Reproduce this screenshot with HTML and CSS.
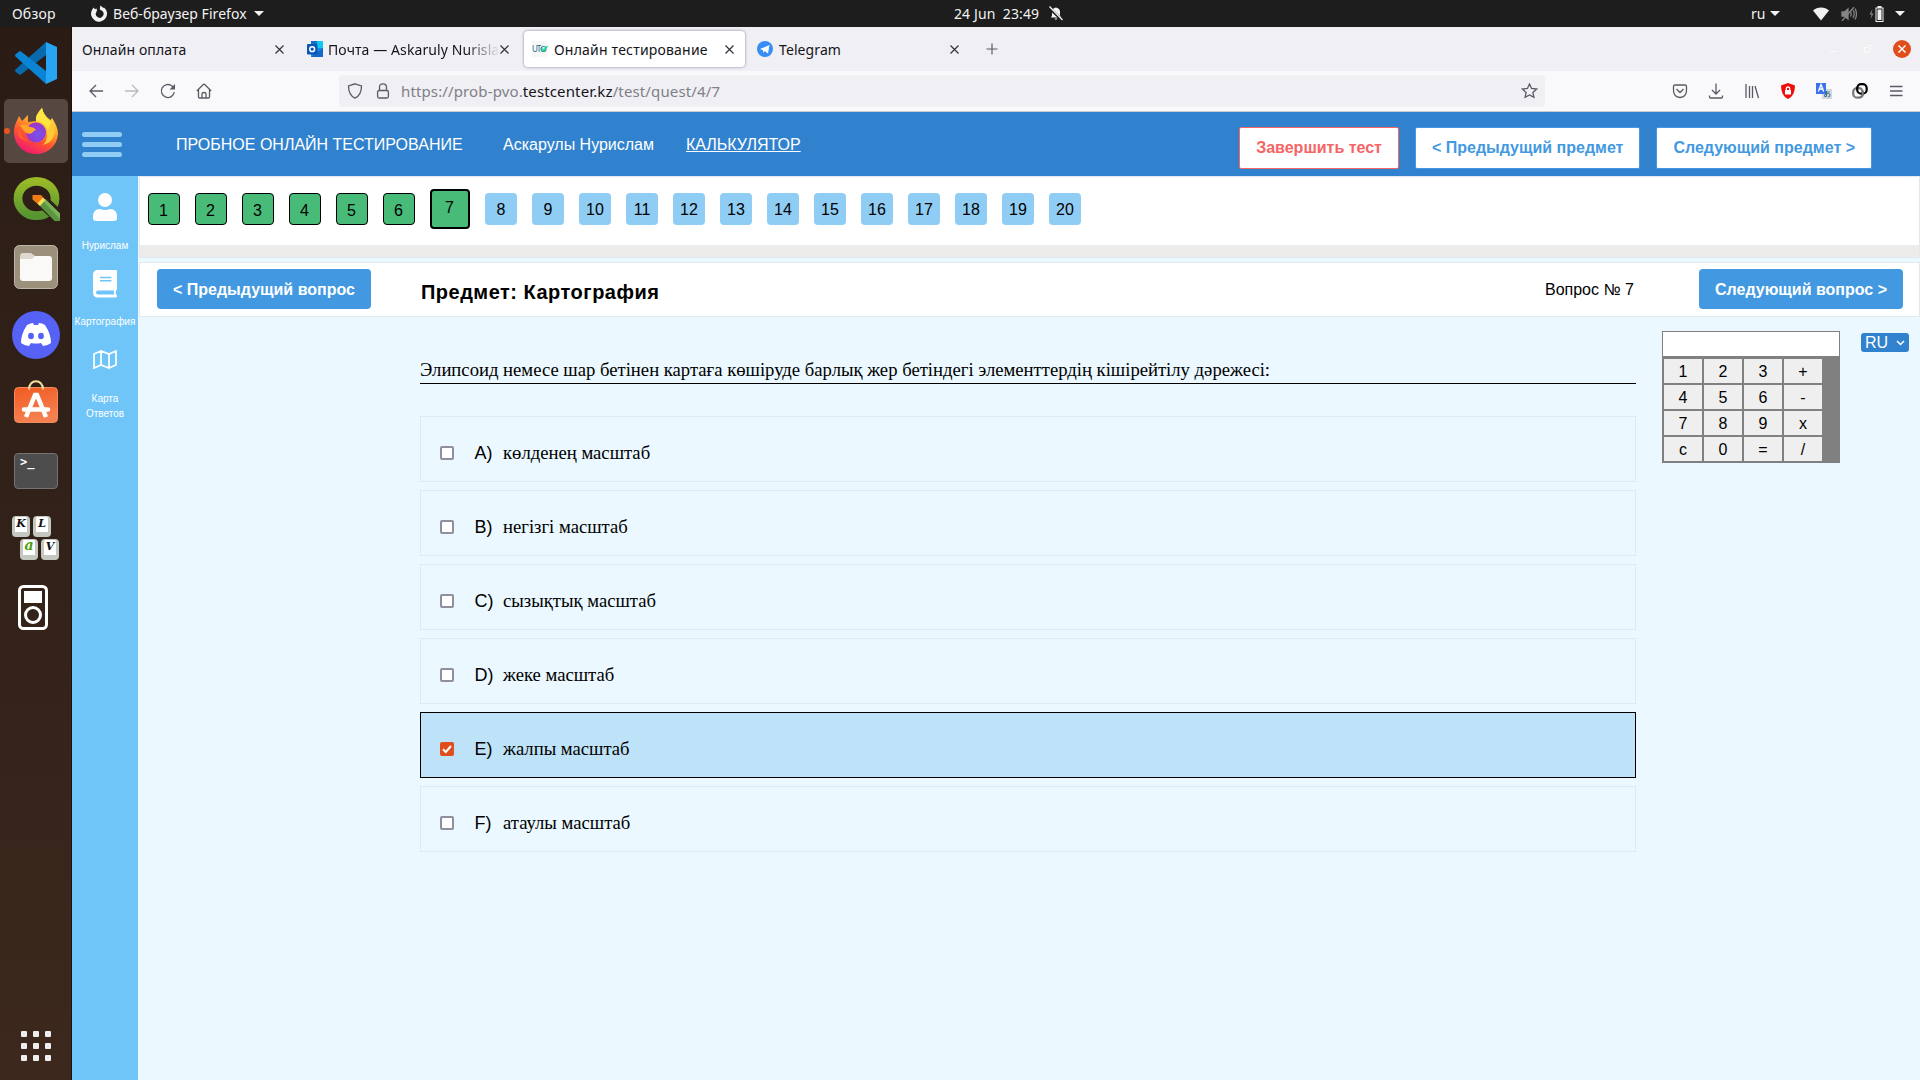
FILE: index.html
```html
<!DOCTYPE html>
<html lang="ru">
<head>
<meta charset="utf-8">
<title>Онлайн тестирование</title>
<link rel="stylesheet" href="styles.css">
</head>
<body>
<header class="topbar">
  <span class="overview">Обзор</span>
  <div class="appmenu">
    <svg width="17" height="17" viewBox="0 0 17 17"><path d="M1 5 2.500 2.500 4 4.200 5.500 3.500 6 5.500 4.800 8.200A3.900 3.900 0 1 0 11 5.800L8.800 4.500 9.300 0.500 12.500 3 13 2.500A8 8 0 1 1 1 5Z" fill="#f2f2f2"/></svg>
    <span class="appname">Веб-браузер Firefox</span>
    <i class="caret"></i>
  </div>
  <div class="clock">
    <span>24 Jun&nbsp; 23:49</span>
    <svg width="14" height="15" viewBox="0 0 14 15"><path d="M2 11.500 3 9.500V6C3 3.500 4.500 2 7 1.500 10 2 11 4 11 6v3.500l1.500 2ZM5.500 12.500h3l-1.500 1.500Z" fill="#f2f2f2"/><path d="M0 1.500 13 14" stroke="#1d1d1d" stroke-width="3"/><path d="M.5.5 13.500 14" stroke="#f2f2f2" stroke-width="1.300"/></svg>
  </div>
  <div class="lang"><span>ru</span><i class="caret"></i></div>
  <div class="tray">
    <svg width="16" height="14" viewBox="0 0 16 14"><path d="M0 3.500C4-.5 12-.5 16 3.500L8 13.500Z" fill="#f2f2f2"/></svg>
    <svg width="16" height="14" viewBox="0 0 16 14" fill="none" stroke="#858585" stroke-width="1.300"><path d="M1 5h2.500L7 2v10L3.500 9H1Z" fill="#858585"/><path d="M9.500 4.500q1.500 2.500 0 5M12 3q2.500 4 0 8M14 1.500q3 5.500 0 11M1 14 13 0"/></svg>
    <svg width="16" height="16" viewBox="0 0 16 16"><path d="M3.500 3 .5 8.500H2.500L1.500 13 4.500 7.500H2.500Z" fill="#858585"/><path d="M8.500 0h4v1.500h2V16h-8V1.500h2Z" fill="#f2f2f2"/><path d="M7.500 2.500h6V15h-6Z" fill="#1d1d1d"/><path d="M8.500 3.500h4V14h-4Z" fill="#f2f2f2"/></svg>
    <i class="caret"></i>
  </div>
</header>
<div class="desktop">
<nav class="dock">
  <div class="slot"><svg width="42" height="42" viewBox="0 0 42 42"><path d="M31 0 1 27q-2 1.500 0 3l3 2.500q1 .5 2 0L31 13Z" fill="#0869ac"/><path d="M31 42 1 15q-2-1.500 0-3l3-2.500q1-.5 2 0L31 29Z" fill="#0a84d4"/><path d="M31 0 42 5v32l-11 5Z" fill="#27a5f2"/></svg></div>
  <div class="slot active"><i class="dot"></i><svg width="46" height="46" viewBox="0 0 46 46"><defs><linearGradient id="fx" x1=".8" y1="0" x2=".3" y2="1"><stop offset="0" stop-color="#fff44f"/><stop offset=".35" stop-color="#ffb02b"/><stop offset=".65" stop-color="#ff552f"/><stop offset="1" stop-color="#ee1676"/></linearGradient><radialGradient id="fp" cx=".6" cy=".6"><stop offset="0" stop-color="#7554ee"/><stop offset="1" stop-color="#9838cf"/></radialGradient></defs><path d="M1 24C1 17 4 13 6 8l3 5 6-6v7l8-1C24 7 27 3 29 0c1 6 6 10 7 14l3-4c5 8 6 12 6 16C44 38 35 46 23 46S1 37 1 24Z" fill="url(#fx)"/><circle cx="23" cy="24.500" r="10" fill="url(#fp)"/><path d="M7 17q7-1 10 2 4 0 6 3-3 1-4 3-5 2-8-2Z" fill="#ffa629"/><path d="M7 17q-1 13 9 16Q9 33 5 27Z" fill="#ff622e"/><path d="M29 0q-7 7-6 13 11 2 11 14 0 6-4 10 10-2 12-13Q41 14 35 10 30 6 29 0Z" fill="#ffc935"/><path d="M29 0q-7 7-6 13 9 1 12 9l3-8Q30 7 29 0Z" fill="#ffe643"/></svg></div>
  <div class="slot"><svg width="47" height="46" viewBox="0 0 47 46"><defs><linearGradient id="qg" x1="0" y1="0" x2="0" y2="1"><stop offset="0" stop-color="#99b928"/><stop offset="1" stop-color="#569531"/></linearGradient></defs><ellipse cx="23.500" cy="22.500" rx="18.500" ry="17.200" fill="none" stroke="url(#qg)" stroke-width="8.800"/><path d="m19 25 23 21h5V33L31 18h-9Z" fill="#2f2018"/><path d="m26 29 6-6 15 14.500V45h-5.500Z" fill="#5c9440"/><path d="m30 25 2-2 15 14.500V43Z" fill="#79b25a"/><path d="M19.500 19H28l3.500 4-5.500 6-6.500-5.500Z" fill="#ee7b16"/><path d="m24.500 27.500 5.500-6 2.500 2.500-5.500 6Z" fill="#f4dc54"/></svg></div>
  <div class="slot"><svg width="46" height="46" viewBox="0 0 46 46"><rect x="1.500" y="1.500" width="43" height="43" rx="5" fill="#9b907b" stroke="#bbb6a8"/><path d="M7 12q0-3 3-3h8l4 3h14v6H7Z" fill="#ddd9ce"/><path d="M7 15h12l3-3h14q3 0 3 3v19q0 3-3 3H10q-3 0-3-3Z" fill="#faf9f7"/></svg></div>
  <div class="slot"><svg width="48" height="48" viewBox="0 0 48 48"><circle cx="24" cy="24" r="24" fill="#5662f6"/><path d="M15 14q4-2 6-2l1 2h4l1-2q3 0 6 2 6 9 6 18-4 3-8 3l-2-3q-5 1-10 0l-2 3q-4 0-8-3 0-9 6-18Z" fill="#fff"/><ellipse cx="19" cy="25" rx="2.900" ry="3.200" fill="#5662f6"/><ellipse cx="29" cy="25" rx="2.900" ry="3.200" fill="#5662f6"/></svg></div>
  <div class="slot store"><svg width="46" height="46" viewBox="0 0 46 46"><defs><linearGradient id="sw" x1="0" y1="0" x2=".3" y2="1"><stop offset="0" stop-color="#f15a22"/><stop offset="1" stop-color="#f58150"/></linearGradient></defs><rect x="1.500" y="8.500" width="43" height="35" rx="4" fill="url(#sw)" stroke="#f48b5e"/><path d="M16 10.500c0-11 14-11 14 0" fill="none" stroke="#f5dc9e" stroke-width="2"/><path d="M13 38 22 16h2l9 22" fill="none" stroke="#fff" stroke-width="4.500"/><path d="M11 30.500h24" stroke="#fff" stroke-width="4.500" stroke-linecap="round"/></svg></div>
  <div class="slot"><div class="term">&gt;_</div></div>
  <div class="slot"><div class="keys"><b>K</b><b>L</b><b class="g">a</b><b>V</b></div></div>
  <div class="slot player"><svg width="30" height="45" viewBox="0 0 30 45"><rect x="1.500" y="1.500" width="27" height="42" rx="4" fill="none" stroke="#fff" stroke-width="3"/><path d="M6 6h18v12H6Z" fill="#fff"/><circle cx="15" cy="30" r="7.500" fill="none" stroke="#fff" stroke-width="3"/></svg></div>
  <div class="apps"><i></i><i></i><i></i><i></i><i></i><i></i><i></i><i></i><i></i></div>
</nav>
<main class="browser">
  <div class="tabs">
    <div class="tab"><span class="tt">Онлайн оплата</span><svg class="x" width="9" height="9"><use href="#x"/></svg></div>
    <div class="tab"><svg width="16" height="16" viewBox="0 0 16 16"><path d="M4 0h12v7H4Z" fill="#0fc7f5"/><path d="M4 0h6v4H4Z" fill="#1570c8"/><path d="M4 7h12v9H4Z" fill="#168de4"/><path d="m4 16 12-9v9Z" fill="#1269c7"/><rect y="3" width="10.500" height="10.500" rx="1" fill="#0a55b5"/><circle cx="5.200" cy="8.200" r="2.400" fill="none" stroke="#fff" stroke-width="1.500"/></svg><span class="tt mail fade">Почта — Askaruly Nurislam</span><svg class="x" width="9" height="9"><use href="#x"/></svg></div>
    <div class="tab current"><span class="fav"><b>UT</b><svg width="8" height="8" viewBox="0 0 8 8"><circle cx="3.500" cy="4" r="2.500" fill="none" stroke="#3a7f9b" stroke-width="1.200"/><path d="m2 3.500 1.700 2L7.500 1" fill="none" stroke="#0fe08a" stroke-width="1.500"/></svg></span><span class="tt wide">Онлайн тестирование</span><svg class="x" width="9" height="9"><use href="#x"/></svg></div>
    <div class="tab"><svg width="16" height="16" viewBox="0 0 16 16"><circle cx="8" cy="8" r="8" fill="#378df4"/><path d="m3 8 9.500-4L11 12.500 7.800 10 6.500 12 6 9.300Z" fill="#fff"/></svg><span class="tt">Telegram</span><svg class="x" width="9" height="9"><use href="#x"/></svg></div>
    <svg class="plus" width="12" height="12" viewBox="0 0 12 12"><path d="M6 .5v11M.5 6h11" stroke="#5b5b66" stroke-width="1.200"/></svg>
    <div class="winbtns"><i class="min"></i><svg class="max" width="9" height="9" viewBox="0 0 9 9"><path d="M.5 2.500h5v5h-5ZM3 .5h5v5" fill="none" stroke="#fafafb"/></svg><span class="close"><svg width="8" height="8" viewBox="0 0 9 9"><path d="m.5.5 8 8m0-8-8 8" stroke="#fff" stroke-width="1.600"/></svg></span></div>
  </div>
  <div class="toolbar">
    <div class="navs">
      <svg width="16" height="16" viewBox="0 0 16 16"><path d="M15 8H2m6-6L2 8l6 6"/></svg>
      <svg class="off" width="16" height="16" viewBox="0 0 16 16"><path d="M1 8h13M8 2l6 6-6 6"/></svg>
      <svg width="16" height="16" viewBox="0 0 16 16"><path d="M14.300 9A6.500 6.500 0 1 1 12 3l2 2"/><path d="M15 1v5.500H9.500Z" fill="#5b5b66" stroke="none"/></svg>
      <svg width="16" height="16" viewBox="0 0 16 16"><path d="M.8 8 7 1.800q1-1 2 0L15.200 8M2.500 6.500V14q0 1 1 1h9q1 0 1-1V6.500M6 15v-4q0-1.500 2-1.500t2 1.500v4"/></svg>
    </div>
    <div class="url">
      <svg width="16" height="16" viewBox="0 0 16 16"><path d="M8 .8 14.500 3c0 6-1.500 9.800-6.500 12.200C3 12.800 1.500 9 1.500 3Z"/></svg>
      <svg width="16" height="16" viewBox="0 0 16 16"><rect x="2.600" y="7.500" width="10.800" height="7.500" rx="1.500"/><path d="M4.500 7.500V4q0-3.200 3.500-3.200T11.500 4v3.500"/></svg>
      <span class="addr">https://prob-pvo.<b>testcenter.kz</b>/test/quest/4/7</span>
      <svg class="star" width="17" height="16" viewBox="0 0 16 16"><path d="m8 1 2.100 4.500 5 .6-3.700 3.300 1 4.900L8 11.900l-4.400 2.400 1-4.900L.9 6.100l5-.6Z"/></svg>
    </div>
    <div class="exts">
      <svg width="16" height="16" viewBox="0 0 16 16"><path d="M3 2h10q1.500 0 1.500 1.500V7q0 7-6.500 7.500Q1.500 14 1.500 7V3.500Q1.500 2 3 2ZM4.500 6 8 9.500 11.500 6"/></svg>
      <svg width="16" height="16" viewBox="0 0 16 16"><path d="M8 .5v10.500M4 7l4 4 4-4M1.500 12.500v1.500q0 1 1 1h11q1 0 1-1v-1.500"/></svg>
      <svg width="16" height="16" viewBox="0 0 16 16"><path d="M2 1v14M5.500 3v12M8.500 3v12M11 3l3.500 12"/></svg>
      <svg width="16" height="16" viewBox="0 0 16 16"><path d="m8 0 7 2.500q0 10.500-7 13.500Q1 13 1 2.500Z" fill="#f20d0d" stroke="none"/><path d="M5 7h6v4.500H5Z" fill="#fff" stroke="none"/><path d="M6.300 7V5.500q0-1.500 1.700-1.500t1.700 1.500V7" stroke="#fff"/></svg>
      <svg width="16" height="16" viewBox="0 0 16 16"><path d="M6 6h10v10H6Z" fill="#d4d7da" stroke="none"/><path d="M0 0h10v11H0Z" fill="#3c72f0" stroke="none"/><path d="m2.300 8.500 2.700-7 2.700 7M3.300 6h3.400" stroke="#fff"/><path d="M8.500 9h5M10.500 8v5.500q-3 .5-2-1.500 5-3 5.500 0 0 2-2 2" stroke="#39728f" stroke-width="1"/></svg>
      <svg width="16" height="16" viewBox="0 0 16 16"><rect x="1.200" y="5.200" width="9.500" height="9.500" rx="4" stroke="#777" stroke-width="2.200"/><rect x="5.200" y="1.200" width="9.500" height="9.500" rx="4" stroke="#000" stroke-width="2.200"/><path d="M10.700 8v3q0 3-3 3.500" stroke="#777" stroke-width="2.200"/></svg>
      <svg width="16" height="16" viewBox="0 0 16 16"><path d="M2 3.500h12.500M2 8h12.500M2 12.500h12.500"/></svg>
    </div>
  </div>
  <div class="page">
    <div class="phead">
      <div class="burger"><i></i><i></i><i></i></div>
      <span class="brand">ПРОБНОЕ ОНЛАЙН ТЕСТИРОВАНИЕ</span>
      <span class="user">Аскарулы Нурислам</span>
      <a class="calclink">КАЛЬКУЛЯТОР</a>
      <div class="hbtns"><button class="red">Завершить тест</button><button>&lt; Предыдущий предмет</button><button>Следующий предмет &gt;</button></div>
    </div>
    <div class="pbody">
      <aside class="side">
        <div class="item person"><svg width="24" height="28" viewBox="0 0 24 28" fill="#fff"><circle cx="12" cy="7" r="7"/><path d="M7 16q5 2 10 0 7 0 7 8v1q0 3-3 3H3q-3 0-3-3v-1q0-8 7-8Z"/></svg><span>Нурислам</span></div>
        <div class="item"><svg width="24" height="28" viewBox="0 0 24 28"><path d="M5 0h18q1 0 1 1v18.500l-1 1q-.6 2.500 0 4 1 0 1 1.500t-1 1.500H5q-5 0-5-5V5Q0 0 5 0Z" fill="#fff"/><path d="M7 7.500h11.500M7 10.700h11.500" stroke="#70c5f8" stroke-width="1.500"/><path d="M5 20.500h16v4H5q-2-.2-2-2t2-2Z" fill="#70c5f8"/></svg><span>Картография</span></div>
        <div class="item map"><svg width="24" height="19" viewBox="0 0 24 19" fill="none" stroke="#fff" stroke-width="1.700"><path d="m1 4 7-3 8 3 7-3v14l-7 3-8-3-7 3ZM8 1v14M16 4v14"/></svg><span>Карта<br>Ответов</span></div>
      </aside>
      <section class="content">
        <div class="nums"><i class="d">1</i><i class="d">2</i><i class="d">3</i><i class="d">4</i><i class="d">5</i><i class="d">6</i><i class="d cur">7</i><i>8</i><i>9</i><i>10</i><i>11</i><i>12</i><i>13</i><i>14</i><i>15</i><i>16</i><i>17</i><i>18</i><i>19</i><i>20</i></div>
        <div class="qbar"><button>&lt; Предыдущий вопрос</button><h2>Предмет: Картография</h2><span class="qn">Вопрос № 7</span><button>Следующий вопрос &gt;</button></div>
        <div class="work">
          <div class="quiz">
            <p class="question">Элипсоид немесе шар бетінен картаға көшіруде барлық жер бетіндегі элементтердің кішірейтілу дәрежесі:</p>
            <div class="opt"><i class="box"></i><span class="let">A)</span><span>көлденең масштаб</span></div>
            <div class="opt"><i class="box"></i><span class="let">B)</span><span>негізгі масштаб</span></div>
            <div class="opt"><i class="box"></i><span class="let">C)</span><span>сызықтық масштаб</span></div>
            <div class="opt"><i class="box"></i><span class="let">D)</span><span>жеке масштаб</span></div>
            <div class="opt sel"><svg class="box" width="14" height="14" viewBox="0 0 14 14"><path d="m3 7.300 2.800 2.700L11 4" fill="none" stroke="#fff" stroke-width="2"/></svg><span class="let">E)</span><span>жалпы масштаб</span></div>
            <div class="opt"><i class="box"></i><span class="let">F)</span><span>атаулы масштаб</span></div>
          </div>
          <div class="calc"><div class="disp"></div><div class="pad"><i>1</i><i>2</i><i>3</i><i>+</i><i>4</i><i>5</i><i>6</i><i>-</i><i>7</i><i>8</i><i>9</i><i>x</i><i>c</i><i>0</i><i>=</i><i>/</i></div></div>
          <div class="ru">RU<svg width="9" height="6" viewBox="0 0 9 6"><path d="m1 1 3.500 3.500L8 1" fill="none" stroke="#fff" stroke-width="1.500"/></svg></div>
        </div>
      </section>
    </div>
  </div>
</main>
</div>
<svg class="defs" width="0" height="0"><symbol id="x" viewBox="0 0 9 9"><path d="m.5.5 8 8m0-8-8 8" stroke="#33323d" stroke-width="1.200"/></symbol></svg>
</body>
</html>
```
FILE: styles.css
```css
* { box-sizing: border-box; }
body { margin: 0; width: 1920px; height: 1080px; overflow: hidden; display: flex; flex-direction: column; font-family: "Liberation Sans", Arial, sans-serif; font-size: 16px; color: #000; }
i { font-style: normal; }
svg { flex: none; display: block; }
.defs { display: none; }
button { font: bold 16px "Liberation Sans", Arial, sans-serif; white-space: nowrap; flex: none; }

/* system bar */
.topbar { height: 27px; flex: none; background: #1d1d1d; color: #f2f2f2; display: flex; align-items: center; font: 14px "Noto Sans", sans-serif; white-space: nowrap; }
.overview { width: 78px; padding-left: 12px; letter-spacing: .2px; }
.appmenu { width: 876px; display: flex; align-items: center; padding-left: 13px; }
.appname { width: 141px; margin-left: 5px; letter-spacing: .05px; }
.caret { border: 5px solid transparent; border-top-color: #f2f2f2; border-bottom: 0; }
.clock { width: 797px; display: flex; align-items: center; }
.clock span { width: 95px; letter-spacing: .1px; }
.lang { width: 62px; display: flex; align-items: center; gap: 5px; }
.tray { display: flex; align-items: center; gap: 12px; }
.tray .caret { margin-left: -2px; }
.desktop { flex: 1; display: flex; min-height: 0; }

/* dock */
.dock { width: 72px; flex: none; background: linear-gradient(#2a1c15, #3c281d); border-right: 1px solid #1b120d; display: flex; flex-direction: column; padding: 2px 0 16px; }
.slot { width: 72px; height: 68px; display: flex; align-items: center; justify-content: center; position: relative; }
.slot.active::before { content: ""; position: absolute; inset: 2px 4px; border-radius: 5px; background: #564840; }
.slot svg { position: relative; }
.store { padding-bottom: 3px; }
.dot { position: absolute; left: 4px; top: 31px; width: 6px; height: 6px; border-radius: 50%; background: #e95420; }
.term { width: 44px; height: 36px; border: 1px solid #737373; border-radius: 4px; background: #4d4d4d; color: #fff; font: bold 12px/16px "DejaVu Sans Mono", monospace; padding-left: 5px; }
.keys { display: grid; grid-template-columns: 18px 18px; gap: 2px 3px; margin: -3px 0 0 -9px; }
.keys b { width: 18px; height: 21px; border: solid #c3c8c1; border-width: 1px 3px 5px; border-radius: 4px; background: #fff; color: #111; font: italic bold 11px/13px "DejaVu Serif", serif; text-align: center; }
.keys b:nth-child(n+3) { transform: translateX(8px); }
.keys .g { color: #4a9c10; font-size: 14px; line-height: 10px; }
.player { padding: 1px 6px 0 0; }
.apps { margin: auto 0 0 21px; display: grid; grid-template-columns: repeat(3, 6px); gap: 6px; padding-bottom: 3px; }
.apps i { width: 6px; height: 6px; border-radius: 1px; background: #eee; }

/* browser */
.browser { flex: 1; display: flex; flex-direction: column; min-width: 0; }
.tabs { height: 44px; flex: none; background: #f0eff4; display: flex; align-items: center; font: 14px "Noto Sans", sans-serif; color: #15141a; }
.tab { width: 221px; height: 36px; margin: 0 2px; display: flex; align-items: center; padding: 0 11px 0 8px; border-radius: 4px; }
.tab.current { background: #fff; box-shadow: 0 0 3px #8080a0; }
.tt { flex: 1; overflow: hidden; white-space: nowrap; min-width: 0; letter-spacing: .1px; }
.wide { letter-spacing: .2px; }
svg + .tt { margin-left: 6px; }
svg + .mail { margin-left: 5px; }
.fade { -webkit-mask-image: linear-gradient(90deg, #000 80%, transparent); mask-image: linear-gradient(90deg, #000 80%, transparent); }
.fav { width: 15px; height: 16px; margin-right: 7px; display: flex; align-items: center; background: #f7f7f7; }
.fav b { width: 8px; font: 8px/16px "Noto Sans", sans-serif; letter-spacing: -1px; color: #24678b; }
.plus { margin-left: 14px; }
.winbtns { margin-left: auto; width: 94px; display: flex; align-items: center; }
.min { width: 8px; height: 1px; background: #fafafb; margin: 5px 0 0 4px; }
.max { margin-left: 26px; }
.close { width: 18px; height: 18px; border-radius: 50%; background: #e04e1b; display: flex; align-items: center; justify-content: center; margin-left: 20px; }
.toolbar { height: 41px; flex: none; background: #f9f9fb; border-bottom: 1px solid #ccccd0; display: flex; align-items: center; }
.toolbar svg { fill: none; stroke: #5b5b66; stroke-width: 1.3; }
.navs { width: 267px; padding-left: 16px; display: flex; gap: 20px; }
.navs .off { opacity: .4; }
.url { width: 1206px; height: 32px; border-radius: 4px; background: #f0eff4; display: flex; align-items: center; padding: 0 7px 0 8px; font: 15px "Noto Sans", sans-serif; color: #808087; }
.url svg + svg { margin-left: 12px; }
.addr { margin-left: 10px; white-space: nowrap; letter-spacing: .13px; }
.addr b { font-weight: normal; color: #15141a; }
.url .star { margin-left: auto; }
.exts { margin-left: 127px; display: flex; gap: 20px; }

/* page header */
.page { flex: 1; display: flex; flex-direction: column; background: #ebf8ff; min-height: 0; }
.phead { height: 64px; flex: none; background: #3182ce; color: #fff; display: flex; align-items: center; padding-left: 10px; white-space: nowrap; }
.burger { width: 40px; display: grid; gap: 5px; }
.burger i { height: 5px; border-radius: 3px; background: #90cdf4; }
.brand { margin: 2px 0 0 54px; width: 327px; }
.user { margin-top: 2px; width: 183px; }
.calclink { margin-top: 2px; text-decoration: underline; }
.hbtns { margin: 8px 48px 0 auto; display: flex; gap: 16px; }
.hbtns button { height: 42px; padding: 0 16px; border: 1px solid #4299e1; border-radius: 2px; background: #fff; color: #4299e1; }
.hbtns .red { color: #f56565; border-color: #f56565; }
.pbody { flex: 1; display: flex; min-height: 0; }

/* sidebar */
.side { width: 66px; flex: none; background: #70c5f8; padding-top: 17px; }
.item { height: 77px; display: flex; flex-direction: column; align-items: center; color: #fff; font-size: 10px; line-height: 15px; text-align: center; }
.item span { margin-top: 16px; white-space: nowrap; }
.item.person span { margin-top: 17px; }
.map { padding-top: 3px; }
.item.map span { margin-top: 22px; }

/* question navigation */
.content { flex: 1; min-width: 0; padding-left: 1px; }
.nums { height: 82px; border: 1px solid #e2e8f0; border-bottom: 0; background: linear-gradient(#fff 68px, #edecea 68px 80px, #e2e8f0 80px); display: flex; gap: 15px; align-items: flex-start; padding: 16px 0 0 8px; }
.nums i { width: 32px; height: 32px; border-radius: 4px; background: #90cdf4; text-align: center; line-height: 34px; }
.nums .d { background: #48bb78; border: 1px solid #000; line-height: 33px; padding-right: 1px; }
.nums .cur { width: 40px; height: 40px; border-width: 2px; margin-top: -4px; line-height: 33px; }
.qbar { margin-top: 4px; height: 55px; background: #fff; border: 1px solid #e2e8f0; display: flex; align-items: center; padding: 0 16px 1px 17px; }
.qbar button { height: 40px; border: 0; border-radius: 4px; background: #4299e1; color: #fff; padding: 2px 16px 0; }
.qbar h2 { margin: 7px 0 0 50px; font-size: 20px; letter-spacing: .5px; }
.qn { margin: 2px 65px 0 auto; }

/* quiz */
.work { display: flex; align-items: flex-start; padding-left: 281px; }
.quiz { width: 1216px; }
.question { margin: 40px 0 32px; height: 27px; border-bottom: 1px solid #000; font: 18.667px/26px "Liberation Serif", "Times New Roman", serif; white-space: nowrap; }
.opt { height: 66px; margin-bottom: 8px; border: 1px solid #dde9f3; padding: 0 0 0 19px; display: flex; align-items: center; font: 18.667px "Liberation Serif", "Times New Roman", serif; }
.opt span { margin-top: 8px; }
.box { width: 14px; height: 14px; border: 2px solid #8f8f9d; border-radius: 2px; background: #fff; margin-top: 8px; }
.sel { background: #bee3f8; border-color: #000; }
.sel .box { border: 0; background: #e04e1b; }
.opt .let { width: 28.500px; margin: 9px 0 0 20.500px; font: 18px "Liberation Sans", Arial, sans-serif; }
.calc { width: 178px; margin: 14px 0 0 26px; background: #808080; border: 1px solid #808080; }
.disp { height: 24px; background: #fff; }
.pad { padding: 3px 0 1px 1px; display: grid; grid-template-columns: repeat(4, 38px); gap: 2px; }
.pad i { height: 24px; background: #efefef; text-align: center; line-height: 25px; }
.ru { width: 48px; height: 19px; margin: 16px 0 0 21px; border-radius: 3px; background: #3182ce; color: #fff; display: flex; align-items: center; gap: 8px; padding-left: 4px; }
```
